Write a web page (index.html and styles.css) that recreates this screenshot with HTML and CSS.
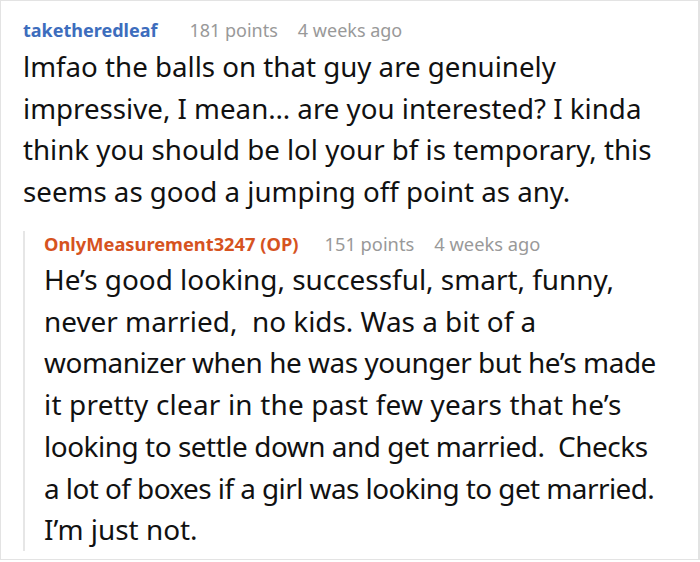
FILE: index.html
```html
<!DOCTYPE html>
<html>
<head>
<meta charset="utf-8">
<link rel="stylesheet" href="styles.css">
</head>
<body>
<div class="thread">
  <div class="comment">
    <div class="meta">
      <span class="user user-blue">taketheredleaf</span>
      <span class="info">181 points</span>
      <span class="info">4 weeks ago</span>
    </div>
    <p class="text">lmfao the balls on that guy are genuinely<br>impressive, I mean… are you interested? I kinda<br>think you should be lol your bf is temporary, this<br>seems as good a jumping off point as any.</p>
    <div class="reply">
      <div class="meta">
        <span class="user user-op">OnlyMeasurement3247 (OP)</span>
        <span class="info">151 points</span>
        <span class="info">4 weeks ago</span>
      </div>
      <p class="text">He’s good looking, successful, smart, funny,<br>never married,&nbsp; no kids. Was a bit of a<br><span class="narrow">womanizer when he was younger but he’s made</span><br><span class="wide">it pretty clear in the past few years that he’s</span><br><span class="narrow">looking to settle down and get married.&nbsp; Checks</span><br><span class="tight">a lot of boxes if a girl was looking to get married.</span><br>I’m just not.</p>
    </div>
  </div>
</div>
</body>
</html>
```

FILE: styles.css
```css
html, body {
  margin: 0;
  padding: 0;
  background: #ffffff;
}
.thread {
  width: 700px;
  height: 560px;
  box-sizing: border-box;
  border: 1px solid #e3e3e3;
  border-right-width: 2px;
  font-family: "Noto Sans", "Open Sans", sans-serif;
  color: #111;
  overflow: hidden;
}
.comment {
  padding: 16px 0 0 22px;
}
.meta {
  display: flex;
  align-items: baseline;
  gap: 20px;
  font-size: 18px;
  line-height: 26px;
  white-space: nowrap;
}
.user {
  font-weight: 700;
  margin-right: 12px;
}
.user-blue { color: #3d6dbd; }
.user-op { color: #d6531f; }
.info { color: #999999; }
.text {
  margin: 3px 0 0;
  font-size: 27.7px;
  line-height: 41.5px;
  white-space: nowrap;
}
.tight {
  letter-spacing: -0.55px;
}
.narrow {
  letter-spacing: -0.45px;
}
.wide {
  letter-spacing: 0.2px;
}
.reply {
  margin-top: 31px;
  border-left: 2px solid #e6e6e6;
  padding-left: 19px;
}
.reply .meta {
  margin-top: -12px;
  font-size: 18.3px;
}
.reply .user {
  margin-right: 6px;
}
.reply .text {
  margin: 2px 0 -9px;
  font-size: 27.9px;
  line-height: 41.7px;
}
```
